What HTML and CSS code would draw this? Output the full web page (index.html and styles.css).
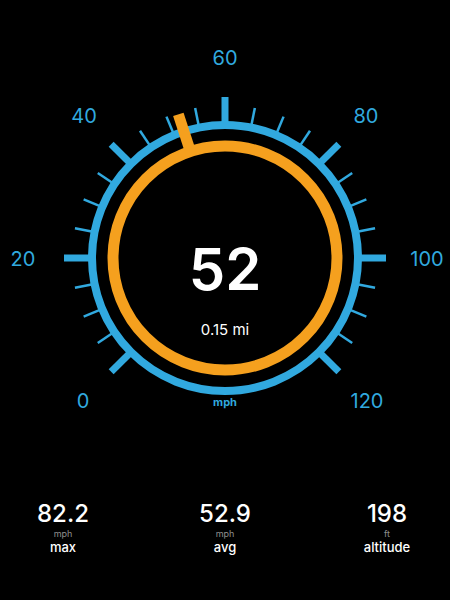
FILE: index.html
```html
<!DOCTYPE html>
<html>
<head>
<meta charset="utf-8">
<link rel="stylesheet" href="styles.css">
</head>
<body>
<div class="screen">
  <svg class="gauge" width="450" height="500" viewBox="0 0 450 500">
    <g transform="translate(225 258)">
      <circle class="ring-blue" r="133"/>
      <g class="ticks-minor">
        <line y1="-136" y2="-153" transform="rotate(-123.75)"/>
        <line y1="-136" y2="-153" transform="rotate(-112.5)"/>
        <line y1="-136" y2="-153" transform="rotate(-101.25)"/>
        <line y1="-136" y2="-153" transform="rotate(-78.75)"/>
        <line y1="-136" y2="-153" transform="rotate(-67.5)"/>
        <line y1="-136" y2="-153" transform="rotate(-56.25)"/>
        <line y1="-136" y2="-153" transform="rotate(-33.75)"/>
        <line y1="-136" y2="-153" transform="rotate(-22.5)"/>
        <line y1="-136" y2="-153" transform="rotate(-11.25)"/>
        <line y1="-136" y2="-153" transform="rotate(11.25)"/>
        <line y1="-136" y2="-153" transform="rotate(22.5)"/>
        <line y1="-136" y2="-153" transform="rotate(33.75)"/>
        <line y1="-136" y2="-153" transform="rotate(56.25)"/>
        <line y1="-136" y2="-153" transform="rotate(67.5)"/>
        <line y1="-136" y2="-153" transform="rotate(78.75)"/>
        <line y1="-136" y2="-153" transform="rotate(101.25)"/>
        <line y1="-136" y2="-153" transform="rotate(112.5)"/>
        <line y1="-136" y2="-153" transform="rotate(123.75)"/>
      </g>
      <g class="ticks-major">
        <line y1="-135" y2="-161" transform="rotate(-135)"/>
        <line y1="-135" y2="-161" transform="rotate(-90)"/>
        <line y1="-135" y2="-161" transform="rotate(-45)"/>
        <line y1="-135" y2="-161" transform="rotate(0)"/>
        <line y1="-135" y2="-161" transform="rotate(45)"/>
        <line y1="-135" y2="-161" transform="rotate(90)"/>
        <line y1="-135" y2="-161" transform="rotate(135)"/>
      </g>
      <circle class="ring-orange" r="112"/>
      <line class="needle" y1="-108" y2="-151" transform="rotate(-18)"/>
      <g class="labels">
        <text x="-142" y="150">0</text>
        <text x="-202" y="8">20</text>
        <text x="-141" y="-135">40</text>
        <text x="0" y="-193">60</text>
        <text x="141" y="-135">80</text>
        <text x="202" y="8">100</text>
        <text x="142" y="150">120</text>
      </g>
      <text class="speed" x="0" y="32">52</text>
      <text class="dist" x="0" y="77">0.15 mi</text>
      <text class="unit" x="0" y="148">mph</text>
    </g>
  </svg>
  <div class="stats">
    <div class="stat">
      <div class="stat-value">82.2</div>
      <div class="stat-unit">mph</div>
      <div class="stat-label">max</div>
    </div>
    <div class="stat">
      <div class="stat-value">52.9</div>
      <div class="stat-unit">mph</div>
      <div class="stat-label">avg</div>
    </div>
    <div class="stat">
      <div class="stat-value">198</div>
      <div class="stat-unit">ft</div>
      <div class="stat-label">altitude</div>
    </div>
  </div>
</div>
</body>
</html>
```
FILE: styles.css
```css
html, body {
  margin: 0;
  padding: 0;
  background: #000;
}
body {
  width: 450px;
  height: 600px;
  overflow: hidden;
  font-family: Inter, "Liberation Sans", sans-serif;
  color: #fff;
}
.screen {
  display: flex;
  flex-direction: column;
}
.gauge {
  display: block;
}
.ring-blue {
  fill: none;
  stroke: #31a9df;
  stroke-width: 8;
}
.ticks-minor line {
  stroke: #31a9df;
  stroke-width: 2.5;
}
.ticks-major line {
  stroke: #31a9df;
  stroke-width: 7;
}
.ring-orange {
  fill: none;
  stroke: #f5a01e;
  stroke-width: 11;
}
.needle {
  stroke: #f5a01e;
  stroke-width: 11;
}
.labels text {
  fill: #31a9df;
  font-size: 20px;
  text-anchor: middle;
  font-family: Inter, "Liberation Sans", sans-serif;
}
.speed {
  fill: #fff;
  font-size: 58px;
  font-weight: 600;
  text-anchor: middle;
}
.dist {
  fill: #fff;
  font-size: 15px;
  text-anchor: middle;
}
.unit {
  fill: #31a9df;
  font-size: 11px;
  font-weight: 700;
  text-anchor: middle;
}
.stats {
  display: flex;
  justify-content: space-between;
  padding: 0 15px;
}
.stat {
  width: 96px;
  display: flex;
  flex-direction: column;
  align-items: center;
}
.stat-value {
  font-size: 24px;
  line-height: 28px;
  font-weight: 500;
}
.stat-unit {
  font-size: 9px;
  line-height: 11px;
  color: #8e8e8e;
}
.stat-label {
  font-size: 13px;
  line-height: 16px;
  font-weight: 500;
}
```
